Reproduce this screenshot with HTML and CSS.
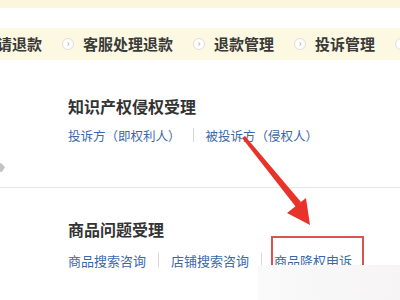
FILE: index.html
```html
<!DOCTYPE html>
<html lang="zh-CN">
<head>
    <meta charset="UTF-8">
    <title>投诉管理</title>
    <link rel="stylesheet" href="styles.css">
</head>
<body>
    <div class="top-band"></div>
    <div class="top-gap"></div>

    <!-- Step bar -->
    <div class="steps">
        <span class="step">申请退款</span><span class="step-dot">›</span>
        <span class="step">客服处理退款</span><span class="step-dot">›</span>
        <span class="step">退款管理</span><span class="step-dot">›</span>
        <span class="step">投诉管理</span><span class="step-dot">›</span>
    </div>

    <div class="section first">
        <h2 class="title">知识产权侵权受理</h2>
        <div class="links">
            <a href="#">投诉方（即权利人）</a>
            <span class="sep"></span>
            <a href="#">被投诉方（侵权人）</a>
        </div>
    </div>

    <div class="side-icon">
        <svg width="10" height="12" viewBox="0 0 10 12"><path d="M0 3 L5 1 L9 5 L6 10 L0 9 Z" fill="#aaa" opacity="0.7"/></svg>
    </div>

    <div class="divider"></div>

    <div class="section second">
        <h2 class="title">商品问题受理</h2>
        <div class="links">
            <a href="#">商品搜索咨询</a>
            <span class="sep"></span>
            <a href="#">店铺搜索咨询</a>
            <span class="sep"></span>
            <a href="#" class="marked">商品降权申诉</a>
        </div>
    </div>

    <!-- annotations drawn over the screenshot -->
    <div class="red-box"></div>
    <svg class="arrow" width="400" height="300" viewBox="0 0 400 300">
        <polygon points="242,138 245,136 301,202 296,207" fill="#e8332a"/>
        <polygon points="310,225 287,213 306,198" fill="#e8332a"/>
    </svg>
    <div class="cover"></div>
</body>
</html>
```

FILE: styles.css
```css
body {
    margin: 0;
    width: 400px;
    height: 300px;
    overflow: hidden;
    background: #fff;
    font-family: "Noto Sans CJK SC", "Noto Sans", sans-serif;
    position: relative;
}

.top-band {
    height: 8px;
    background: #fcf6df;
}

.top-gap {
    height: 20px;
}

/* Step bar */
.steps {
    height: 32px;
    background: #fcf8e1;
    display: flex;
    align-items: center;
    margin-left: -18px;
    white-space: nowrap;
}

.step {
    font-size: 15px;
    font-weight: bold;
    color: #3a3a3a;
    line-height: 30px;
}

.step-dot {
    width: 10px;
    height: 10px;
    border: 1px solid #ddd;
    border-radius: 50%;
    background: #fff;
    color: #999;
    font-size: 9px;
    line-height: 9px;
    text-align: center;
    margin: 0 9px 0 20px;
    flex-shrink: 0;
}

/* Sections */
.section {
    padding-left: 68px;
}

.section.first {
    padding-top: 36px;
}

.section.second {
    padding-top: 31px;
}

.title {
    margin: 0;
    font-size: 16px;
    font-weight: bold;
    color: #333;
    line-height: 20px;
}

.links {
    display: flex;
    align-items: center;
    margin-top: 9px;
    height: 20px;
}

.links a {
    font-size: 12.5px;
    color: #3d68a8;
    text-decoration: none;
}

.second .links {
    margin-top: 11px;
}

.second .links a {
    font-size: 13px;
}

.sep {
    width: 1px;
    height: 14px;
    background: #d6d6d6;
    margin: 0 12px;
}

.side-icon {
    height: 42px;
    padding-top: 10px;
    margin-left: -4px;
    box-sizing: border-box;
}

.divider {
    height: 1px;
    background: #e6e6e6;
}

/* Annotation overlays */
.red-box {
    position: absolute;
    left: 271px;
    top: 236px;
    width: 89px;
    height: 40px;
    border: 2px solid #d9534f;
}

.arrow {
    position: absolute;
    left: 0;
    top: 0;
}

.cover {
    position: absolute;
    left: 258px;
    top: 265px;
    width: 142px;
    height: 35px;
    background: linear-gradient(90deg, #fafafa, #f6f4f4);
}
```
